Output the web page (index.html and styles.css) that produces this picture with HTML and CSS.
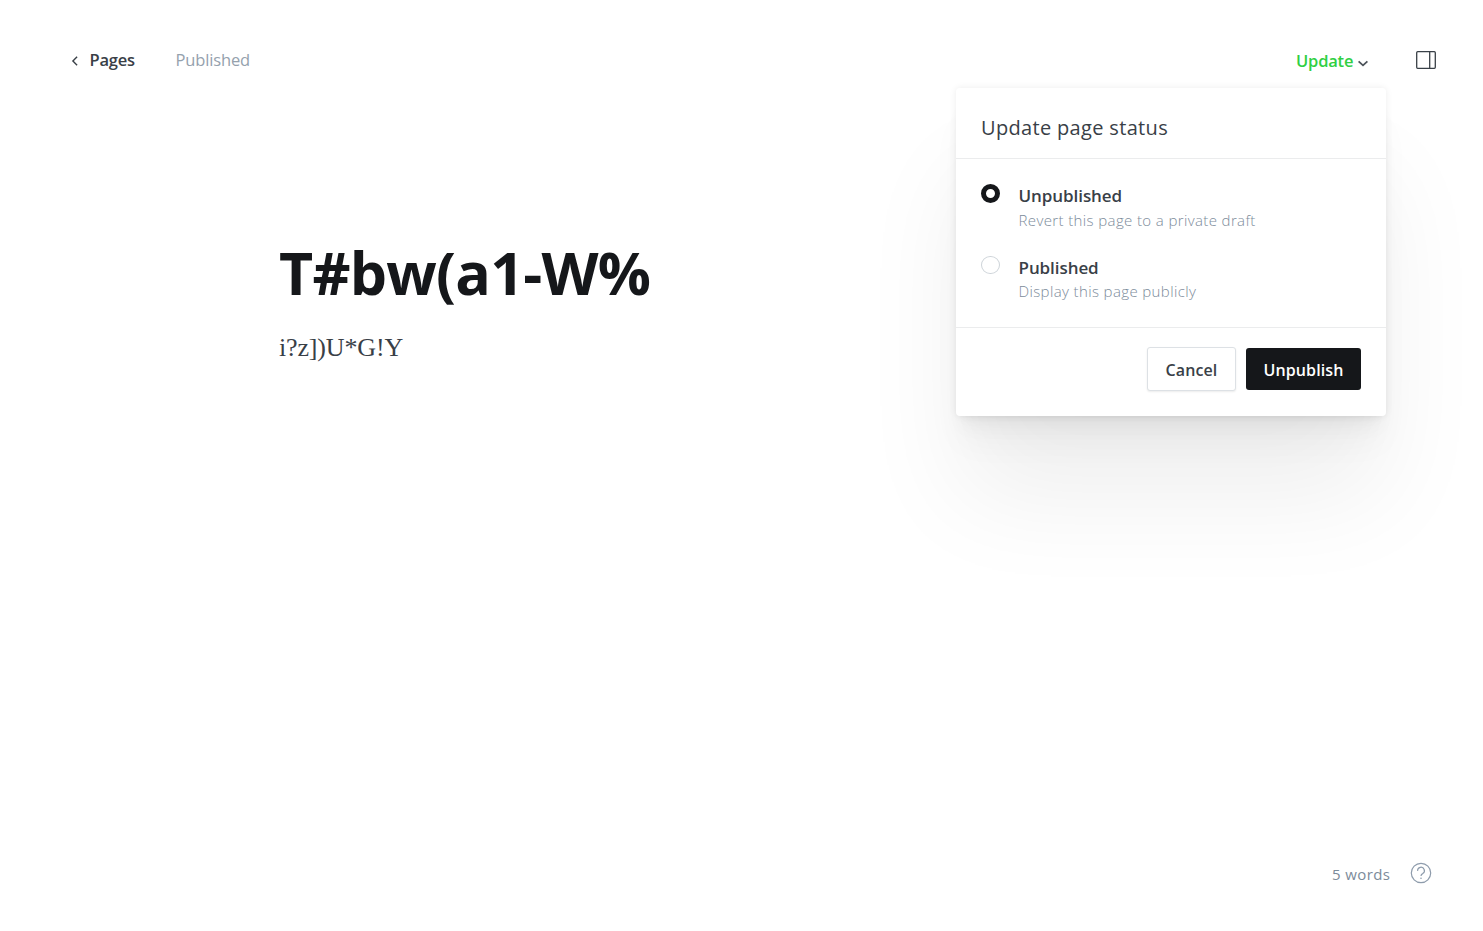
FILE: index.html
```html
<!DOCTYPE html>
<html lang="en">
<head>
<meta charset="utf-8">
<title>Editor</title>
<link rel="stylesheet" href="styles.css">
</head>
<body>
<div class="editor">
  <header class="topbar">
    <nav class="crumbs">
      <a class="back"><svg class="back-icon" width="7" height="10" viewBox="0 0 7 10"><path d="M6.1 .8 1.9 5l4.2 4.2"/></svg><span class="back-label">Pages</span></a>
      <span class="state">Published</span>
    </nav>
    <div class="actions">
      <div class="update"><span class="update-label">Update</span><svg class="caret" width="10" height="7" viewBox="0 0 10 7"><path d="M.6 1.3 5 5.3l4.4-4"/></svg>
        <section class="menu">
          <h2 class="menu-head"><span class="menu-title">Update page status</span></h2>
          <div class="options">
            <div class="option"><span class="radio radio-on"></span><div><div class="name name-un">Unpublished</div><div class="desc desc-un">Revert this page to a private draft</div></div></div>
            <div class="option"><span class="radio"></span><div><div class="name name-pub">Published</div><div class="desc desc-pub">Display this page publicly</div></div></div>
          </div>
          <footer class="menu-foot"><button class="btn cancel">Cancel</button><button class="btn primary">Unpublish</button></footer>
        </section>
      </div>
      <svg class="panel-icon" width="20" height="18" viewBox="0 0 20 18"><rect x=".7" y=".7" width="18.6" height="16.6" rx="1"/><path d="M13.7.7v16.6"/></svg>
    </div>
  </header>
  <main class="document">
    <h1 class="title"><span>T#bw(a1-W%</span></h1>
    <p class="body"><span>i?z])U*G!Y</span></p>
  </main>
  <footer class="status"><span class="words">5 words</span>
    <svg class="help" width="22" height="22" viewBox="0 0 22 22"><circle cx="11" cy="11" r="9.7"/><path d="M7.6 8.9a3.4 3.4 0 1 1 5.1 2.7c-1.1.6-1.7 1.1-1.7 2.5"/><circle class="dot" cx="11" cy="16.2" r=".8"/></svg>
  </footer>
</div>
</body>
</html>
```
FILE: styles.css
```css
* { box-sizing: border-box; }
body { margin: 0; background: #fff; color: #15171a; font-family: "Open Sans", "Noto Sans", sans-serif; }
svg { display: block; fill: none; stroke: #394047; }
.editor { height: 931px; display: flex; flex-direction: column; overflow: hidden; }
.topbar { height: 120px; flex: none; padding: 0 47px 0 71px; display: flex; justify-content: space-between; align-items: center; }
.crumbs { display: flex; align-items: center; font-size: 16.5px; line-height: 24px; }
.back { display: flex; align-items: center; width: 104.5px; font-weight: 600; color: #394047; }
.back-icon { margin: 2px 11.5px 0 0; stroke-width: 1.4; }
.back-label { letter-spacing: -.2px; }
.state { color: #95a1ad; letter-spacing: -.15px; }
.actions { display: flex; align-items: center; }
.update { position: relative; display: flex; align-items: center; width: 120px; height: 24px; margin-top: 2px; color: #30cf43; font-size: 16.5px; font-weight: 600; line-height: 24px; }
.update-label { width: 62px; letter-spacing: -.2px; }
.caret { margin-top: 4px; stroke: #4c535a; stroke-width: 1.8; }
.panel-icon { stroke-width: 1.3; }
.menu { position: absolute; top: 39px; right: 30px; width: 430px; height: 328px; border-radius: 4px; background: #fff; color: #394047; font-weight: 400; z-index: 1; box-shadow: 0 0 7px rgba(0,0,0,.08), 0 2.1px 2.2px -5px rgba(0,0,0,.01), 0 5.1px 5.3px -5px rgba(0,0,0,.02), 0 9.5px 10px -5px rgba(0,0,0,.024), 0 17px 17.9px -5px rgba(0,0,0,.03), 0 31.8px 33.4px -5px rgba(0,0,0,.034), 0 85px 100px -5px rgba(0,0,0,.065); }
.menu-head { height: 71px; margin: 0; padding: 25px 25px 0; border-bottom: 1px solid #ebeced; font-size: 20px; line-height: 30px; font-weight: 400; }
.menu-title { letter-spacing: .33px; }
.options { height: 169px; padding: 25px 25px 0; border-bottom: 1px solid #ebeced; }
.option { display: flex; gap: 18.5px; height: 71.5px; }
.radio { width: 19px; height: 18.5px; border: 1px solid #ced4d9; border-radius: 50%; background: #fff; }
.radio-on { height: 19px; border: 5px solid #15171a; }
.name { font-size: 17px; line-height: 23px; font-weight: 600; letter-spacing: -.07px; white-space: nowrap; }
.desc { font-size: 15px; line-height: 27px; font-weight: 300; color: #7c8b9a; letter-spacing: .38px; white-space: nowrap; }
.desc-pub { line-height: 24px; }
.menu-foot { display: flex; justify-content: flex-end; align-items: center; gap: 10px; padding: 19px 25px 0; }
.btn { height: 42px; border: 0; border-radius: 3px; padding: 1px 0 0; font: 600 16px/24px "Open Sans", sans-serif; letter-spacing: .1px; }
.cancel { width: 89px; height: 44px; border: 1px solid #dde1e5; background: #fff; color: #394047; box-shadow: 0 1px 2px rgba(0,0,0,.08); }
.primary { width: 115px; background: #15171a; color: #fff; }
.document { flex: 1; padding: 110px 280px 0 279px; }
.title { margin: 0; font-size: 59px; line-height: 84px; font-weight: 700; letter-spacing: -.75px; }
.body { margin: 15px 0 0; color: #394047; font: 26px/38px "Liberation Serif", serif; letter-spacing: -.15px; }
.status { height: 116px; flex: none; display: flex; justify-content: flex-end; padding: 47px 51px 0 0; font-size: 15px; line-height: 24px; color: #7c8b9a; }
.words { width: 78px; letter-spacing: .4px; }
.help { stroke: #8e9cac; stroke-width: 1.2; }
.dot { fill: #8e9cac; stroke: none; }
```
